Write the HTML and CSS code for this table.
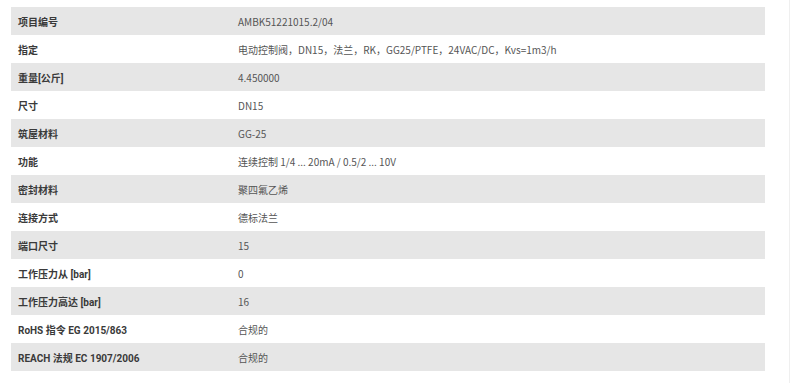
FILE: index.html
```html
<!DOCTYPE html>
<html lang="zh-CN">
<head>
<meta charset="utf-8">
<title>Specs</title>
<link rel="stylesheet" href="styles.css">
</head>
<body>
<div class="page">
  <table class="specs">
    <tr class="alt"><th>项目编号</th><td>AMBK51221015.2/04</td></tr>
    <tr><th>指定</th><td>电动控制阀，DN15，法兰，RK，GG25/PTFE，24VAC/DC，Kvs=1m3/h</td></tr>
    <tr class="alt"><th>重量[公斤]</th><td>4.450000</td></tr>
    <tr><th>尺寸</th><td>DN15</td></tr>
    <tr class="alt"><th>筑屋材料</th><td>GG-25</td></tr>
    <tr><th>功能</th><td>连续控制 1/4 ... 20mA / 0.5/2 ... 10V</td></tr>
    <tr class="alt"><th>密封材料</th><td>聚四氟乙烯</td></tr>
    <tr><th>连接方式</th><td>德标法兰</td></tr>
    <tr class="alt"><th>端口尺寸</th><td>15</td></tr>
    <tr><th>工作压力从 [bar]</th><td>0</td></tr>
    <tr class="alt"><th>工作压力高达 [bar]</th><td>16</td></tr>
    <tr><th>RoHS 指令 EG 2015/863</th><td>合规的</td></tr>
    <tr class="alt"><th>REACH 法规 EC 1907/2006</th><td>合规的</td></tr>
  </table>
</div>
</body>
</html>
```
FILE: styles.css
```css
html, body {
  margin: 0;
  padding: 0;
  background: #ffffff;
}
.page {
  width: 790px;
  height: 383px;
  box-sizing: border-box;
  padding: 7px 0 0 11px;
  border-right: 1px solid #efefef;
}
.specs {
  width: 754px;
  border-collapse: collapse;
  font-size: 10px;
}
.specs tr {
  height: 28px;
}
.specs tr.alt {
  background: #e6e6e6;
}
.specs th {
  width: 220px;
  padding: 0 0 0 7px;
  text-align: left;
  font-family: Roboto, "Noto Sans CJK SC", sans-serif;
  font-weight: 700;
  color: #3a3a3a;
}
.specs td {
  padding: 0;
  font-family: "Noto Sans CJK SC", sans-serif;
  font-size: 10px;
  color: #555555;
}
```
